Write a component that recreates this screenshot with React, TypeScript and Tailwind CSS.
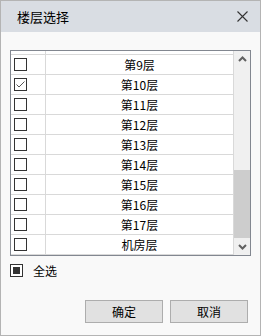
import React from 'react';

const FLOORS = [
  { name: '第9层', checked: false },
  { name: '第10层', checked: true },
  { name: '第11层', checked: false },
  { name: '第12层', checked: false },
  { name: '第13层', checked: false },
  { name: '第14层', checked: false },
  { name: '第15层', checked: false },
  { name: '第16层', checked: false },
  { name: '第17层', checked: false },
  { name: '机房层', checked: false },
];

const Box: React.FC<{ checked?: boolean }> = ({ checked }) => (
  <div className="w-[13px] h-[13px] border border-[#333333] bg-white flex items-center justify-center">
    {checked && (
      <svg width="11" height="11" viewBox="0 0 11 11">
        <polyline points="1.5,5.5 4,8 9.5,2.5" fill="none" stroke="#555" strokeWidth="1" />
      </svg>
    )}
  </div>
);

const App: React.FC = () => {
  return (
    <div
      className="w-[261px] h-[336px] border border-[#b4b4b4] flex flex-col text-black"
      style={{ fontFamily: '"Noto Sans CJK SC", "Noto Sans", sans-serif' }}
    >
      {/* title bar */}
      <div className="h-[31px] bg-[#d9dde3] flex items-center justify-between pl-[16px] pr-[12px]">
        <span className="text-[13px] leading-none">楼层选择</span>
        <svg width="11" height="11" viewBox="0 0 11 11">
          <path d="M0.5 0.5 L10.5 10.5 M10.5 0.5 L0.5 10.5" stroke="#333" strokeWidth="1.1" />
        </svg>
      </div>

      <div className="flex-1 bg-[#f9f9f9] px-[9px] pt-[18px] flex flex-col">
        {/* list box */}
        <div className="h-[206px] border border-[#828790] bg-white flex">
          <div className="flex-1 flex flex-col border-r border-[#d9d9d9]">
            <div className="h-[4px] border-b border-[#d9d9d9] flex">
              <div className="w-[35px] border-r border-[#d9d9d9]" />
            </div>
            {FLOORS.map(f => (
              <div key={f.name} className="h-[20px] border-b border-[#d9d9d9] flex">
                <div className="w-[35px] border-r border-[#d9d9d9] pl-[3px] flex items-center">
                  <Box checked={f.checked} />
                </div>
                <div className="flex-1 flex items-center justify-center text-[12px] leading-none">{f.name}</div>
              </div>
            ))}
          </div>
          {/* scrollbar */}
          <div className="w-[16px] bg-[#f0f0f0] flex flex-col">
            <div className="h-[16px] flex items-center justify-center">
              <svg width="9" height="6" viewBox="0 0 9 6">
                <polyline points="1,5 4.5,1.5 8,5" fill="none" stroke="#606060" strokeWidth="2" />
              </svg>
            </div>
            <div className="flex-1 flex flex-col pt-[103px]">
              <div className="h-[68px] bg-[#cdcdcd]" />
            </div>
            <div className="h-[16px] flex items-center justify-center">
              <svg width="9" height="6" viewBox="0 0 9 6">
                <polyline points="1,1 4.5,4.5 8,1" fill="none" stroke="#606060" strokeWidth="2" />
              </svg>
            </div>
          </div>
        </div>

        {/* select all */}
        <div className="mt-[8px] flex items-center gap-[10px]">
          <div className="w-[13px] h-[13px] border border-[#333333] bg-white flex items-center justify-center">
            <div className="w-[7px] h-[7px] bg-[#333333]" />
          </div>
          <span className="text-[12px] leading-none">全选</span>
        </div>

        {/* buttons */}
        <div className="mt-[23px] flex justify-end gap-[7px] pr-[3px]">
          <button className="w-[78px] h-[23px] bg-[#e1e1e1] border border-[#adadad] text-[12px] leading-none">确定</button>
          <button className="w-[78px] h-[23px] bg-[#e1e1e1] border border-[#adadad] text-[12px] leading-none">取消</button>
        </div>
      </div>
    </div>
  );
};

export default App;
